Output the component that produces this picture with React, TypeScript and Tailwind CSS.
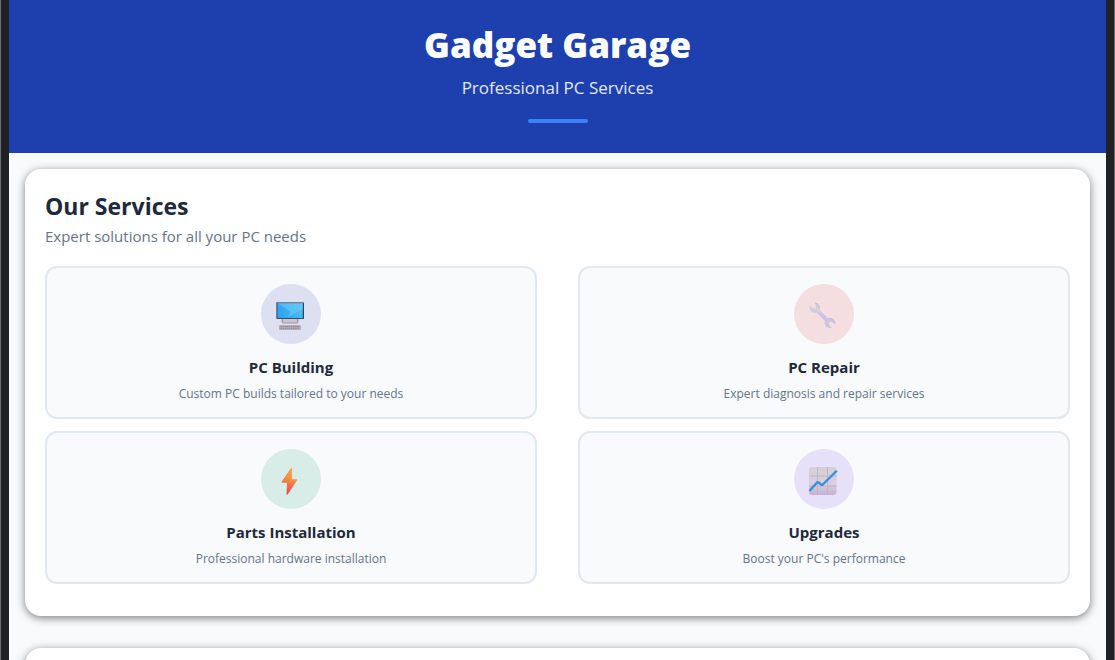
import type { ReactNode } from "react";

function ComputerIcon() {
  return (
    <svg viewBox="0 0 32 32" className="size-8" aria-hidden="true">
      <defs>
        <linearGradient id="screen" x1="0" y1="0.2" x2="1" y2="0">
          <stop offset="0" stopColor="#2fa5f0" />
          <stop offset="1" stopColor="#4cc0f3" />
        </linearGradient>
      </defs>
      <path d="M8 20h16v4.6H8z" fill="#c9c5d0" />
      <path d="M7.6 20H9v3.6H7.6zM23 20h1.4v3.6H23z" fill="#9c96a4" />
      <path d="M8.4 23.4h15.2v1H8.4z" fill="#a49cab" />
      <rect x="2" y="3" width="28" height="17" rx="0.8" fill="#84788e" />
      <path d="M3 4.2h27v15.6H3z" fill="#333f52" />
      <path d="M3.4 4.2h25.4v14.8H3.4z" fill="url(#screen)" />
      <path d="M3.4 4.2h25.4v6L13 18.4 17 13z" fill="#7fd0fa" opacity="0.45" />
      <rect x="5" y="26" width="22" height="5" rx="0.6" fill="#b8afb9" />
      <path d="M6.5 27.5h19M6.5 29.3h19" stroke="#8b838f" strokeWidth="1" strokeDasharray="1.4 0.7" />
    </svg>
  );
}

function WrenchIcon() {
  return (
    <svg viewBox="0 0 32 32" className="size-8" aria-hidden="true">
      <defs>
        <linearGradient id="wrench" x1="0" y1="0" x2="1" y2="1">
          <stop offset="0" stopColor="#cbc8cf" />
          <stop offset="0.35" stopColor="#d6d0dd" />
          <stop offset="0.55" stopColor="#cfc2ee" />
          <stop offset="0.8" stopColor="#cdc8d8" />
          <stop offset="1" stopColor="#cdbcea" />
        </linearGradient>
      </defs>
      <path
        d="M7.6 3.8 C10.6 3.9 12.9 6 13 8.8 Q13 10 12.6 11 L21 19 C23.2 18.2 25.5 18.8 27 20.4 C28.3 21.8 28.6 23.6 28 25.4 L24.5 22.7 L22.2 23.2 L21.8 25.4 L24.7 28.9 C22.8 29.4 20.6 29 19 27.4 C17.5 25.8 17.1 23.7 17.8 21.8 L9.5 13.8 C7.4 14.3 5.3 13.6 3.9 12 C2.6 10.5 2.2 8.5 2.9 6.7 L6 9.6 L8.4 9 L9 6.9 Z"
        fill="url(#wrench)"
      />
      <path d="M11 13.2 19 21.1" stroke="#cbbdee" strokeWidth="1.4" />
      <path d="M8.4 4.2c2.6.4 4 2.2 3.8 4.7M21 20c2.2-.8 4.8 0 6 2.2" stroke="#c0bec4" strokeWidth="0.8" fill="none" />
    </svg>
  );
}

function BoltIcon() {
  return (
    <svg viewBox="0 0 32 32" className="size-8" aria-hidden="true">
      <defs>
        <linearGradient id="bolt" x1="0.6" y1="0" x2="0.4" y2="1">
          <stop offset="0" stopColor="#f8ae42" />
          <stop offset="0.45" stopColor="#f78b43" />
          <stop offset="1" stopColor="#f23c4d" />
        </linearGradient>
      </defs>
      <path
        d="M17 4.2 7.8 17.5c-.4.7-.1 1.2.6 1.2h4.7l-.6 11.2c0 .9.8 1 1.3.3l9.1-13.8c.4-.7.1-1.2-.6-1.2h-4.4l.2-10.8c0-.8-.7-.9-1.1-.2z"
        fill="url(#bolt)"
      />
      <path d="m16.8 5-8.9 12.8h5.8" stroke="#c98449" strokeWidth="0.6" fill="none" opacity="0.6" />
    </svg>
  );
}

function ChartIcon() {
  return (
    <svg viewBox="0 0 32 32" className="size-8" aria-hidden="true">
      <defs>
        <linearGradient id="chart" x1="0" y1="0" x2="0" y2="1">
          <stop offset="0" stopColor="#d5d0d8" />
          <stop offset="0.6" stopColor="#d9cee0" />
          <stop offset="1" stopColor="#c7b1cf" />
        </linearGradient>
      </defs>
      <rect x="2" y="3" width="27.5" height="28" rx="3" fill="url(#chart)" />
      <path d="M10.5 3v28M20.5 3v28M2 12h27.5M2 22h27.5" stroke="#bdb3c2" strokeWidth="0.9" />
      <path d="M2.5 27 10 18.5q.8-.8 1.6 0l2.6 2.2q.8.6 1.6-.2L29.8 6.8" stroke="#3290dc" strokeWidth="2.3" fill="none" />
    </svg>
  );
}

type Service = { name: string; detail: string; tint: string; icon: ReactNode };

const services: Service[] = [
  { name: "PC Building", detail: "Custom PC builds tailored to your needs", tint: "bg-[#dce0f0]", icon: <ComputerIcon /> },
  { name: "PC Repair", detail: "Expert diagnosis and repair services", tint: "bg-[#f5dee0]", icon: <WrenchIcon /> },
  { name: "Parts Installation", detail: "Professional hardware installation", tint: "bg-[#d8ece8]", icon: <BoltIcon /> },
  { name: "Upgrades", detail: "Boost your PC's performance", tint: "bg-[#e7e0f9]", icon: <ChartIcon /> },
];

function ServiceCard({ name, detail, tint, icon }: Service) {
  return (
    <button
      type="button"
      className="flex flex-col items-center rounded-xl border-2 border-[#e2e8f0] bg-[#f8fafc] p-4"
    >
      <span className={`mb-3 flex size-[60px] items-center justify-center rounded-full pt-0.5 pr-0.5 ${tint}`}>
        {icon}
      </span>
      <span className="mb-2 text-[15px] leading-[22px] font-bold text-[#1e293b]">{name}</span>
      <span className="text-xs leading-[15px] text-[#64748b]">{detail}</span>
    </button>
  );
}

export default function App() {
  return (
    <div className="h-screen overflow-hidden border-x border-[#6c6d6c] bg-[#202124] px-2 font-['Open_Sans','Noto_Sans',sans-serif]">
      <div className="h-full overflow-hidden bg-[#f8fafc]">
        <header className="flex flex-col items-center bg-[#1e40af] px-5 pt-5 pb-[30px]">
          <h1 className="mb-1.5 text-[35px] leading-[50px] font-extrabold text-white">Gadget Garage</h1>
          <p className="mb-5 text-[17px] leading-[23px] text-[#e2e8f0]">Professional PC Services</p>
          <div className="h-1 w-[60px] rounded-xs bg-[#3b82f6]" />
        </header>
        <main className="flex flex-col gap-8 p-4">
          <section className="rounded-2xl bg-white px-5 pt-5 pb-8 shadow-[0_2px_8px_rgba(0,0,0,0.5)]">
            <h2 className="text-[23px] leading-[35px] font-bold text-[#1e293b]">Our Services</h2>
            <p className="mb-[17px] text-[15px] leading-[25px] text-[#64748b]">Expert solutions for all your PC needs</p>
            <div className="grid grid-cols-[48%_48%] justify-between gap-y-3">
              {services.map((service) => (
                <ServiceCard key={service.name} {...service} />
              ))}
            </div>
          </section>
          <section className="min-h-40 rounded-2xl bg-white p-5 shadow-[0_2px_8px_rgba(0,0,0,0.5)]" />
        </main>
      </div>
    </div>
  );
}
